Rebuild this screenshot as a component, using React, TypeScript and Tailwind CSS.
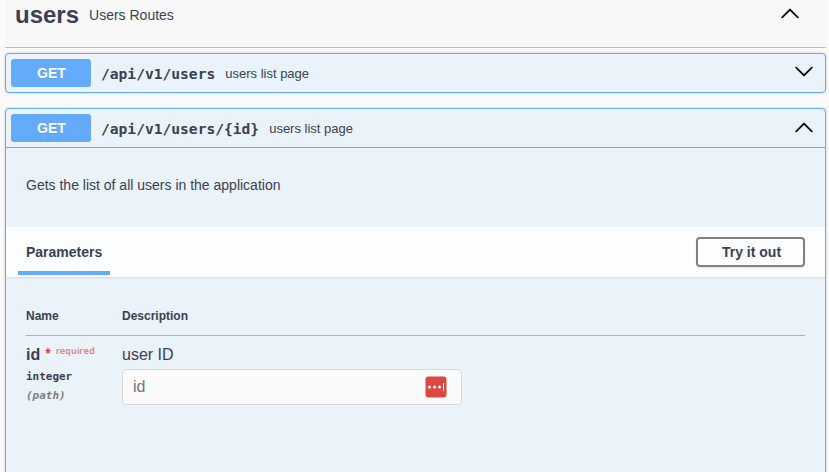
import React from 'react';

const mono = "font-['DejaVu_Sans_Mono',monospace]";

function Chevron({ down = false }: { down?: boolean }) {
  return (
    <svg width="20" height="20" viewBox="0 0 20 20" className={down ? 'rotate-180' : ''} aria-hidden="true">
      <path
        fill="#000"
        stroke="#000"
        strokeWidth="0.3"
        d="M17.418 14.908c.272.281.709.281.979 0s.271-.736 0-1.017l-7.908-7.829c-.27-.281-.707-.281-.979 0l-7.908 7.83c-.27.28-.27.735 0 1.016.271.282.709.282.979 0L10 7.767z"
      />
    </svg>
  );
}

function Summary({ path, down }: { path: string; down?: boolean }) {
  return (
    <div className="flex h-[38px] items-center pl-[5px] pr-[11px]">
      <span className="h-7 w-20 rounded-[3px] bg-[#65abfc] pl-px text-center text-[14px] font-bold leading-7 text-white [text-shadow:0_1px_0_rgba(0,0,0,0.1)]">
        GET
      </span>
      <span className={`${mono} ml-2.5 mt-px text-[14.6px] font-bold leading-5 whitespace-nowrap`}>{path}</span>
      <span className="ml-2.5 mt-0.5 flex-1 text-[13px] leading-5">users list page</span>
      <div className={down ? 'mb-0.5' : 'mb-[3px]'}>
        <Chevron down={down} />
      </div>
    </div>
  );
}

export default function App() {
  return (
    <main className="h-[472px] w-[829px] overflow-hidden bg-[#fafafa] pl-[5px] pr-[3px] font-['Liberation_Sans',Arial,sans-serif] text-[#3b4151]">
      <header className="flex h-12 items-start border-b border-[#bdbec1] bg-[#f8f8f8] pl-2.5 pr-[26px]">
        <h2 className="text-[24px] font-bold leading-[30px]">users</h2>
        <p className="ml-2.5 flex-1 text-[14px] leading-[30px]">Users Routes</p>
        <div className="mt-[3px]">
          <Chevron />
        </div>
      </header>

      <section className="mt-[5px] rounded border border-[#65abfc] bg-[#eaf2fa] shadow-[0_0_3px_rgba(0,0,0,0.19)]">
        <Summary path="/api/v1/users" down />
      </section>

      <section className="mt-[15px] h-[400px] rounded border border-[#65abfc] bg-[#eaf2fa] shadow-[0_0_3px_rgba(0,0,0,0.19)]">
        <div className="border-b border-[#65abfc]">
          <Summary path="/api/v1/users/{id}" />
        </div>
        <p className="h-[79px] px-5 pt-[27px] text-[14px] leading-5">Gets the list of all users in the application</p>

        <div className="flex h-[50px] items-center justify-between bg-[#fcfdff] pl-3 pr-5 shadow-[0_1px_2px_rgba(0,0,0,0.1)]">
          <h4 className="mt-0.5 h-11 w-[92px] border-b-4 border-[#65abfc] pl-2 text-[14px] font-bold leading-[42px]">
            Parameters
          </h4>
          <button className="h-[30px] w-[109px] rounded border-2 border-[#808080] pl-0.5 text-[14px] font-bold leading-[26px] shadow-[0_1px_2px_rgba(0,0,0,0.1)]">
            Try it out
          </button>
        </div>

        <div className="px-5 pt-[29px]">
          <div className="flex h-[30px] border-b border-[#a9b1be] text-[12px] font-bold leading-5">
            <span className="w-24">Name</span>
            <span>Description</span>
          </div>
          <div className="flex pt-[9px]">
            <div className="w-24">
              <div className="flex h-5 text-[16px] font-bold leading-5">
                <span>id</span>
                <span className="ml-[5px] font-['Open_Sans',sans-serif] text-[10px] leading-[15px] text-[#f22]">*</span>
                <span className="ml-[5px] -mt-0.5 font-['Open_Sans',sans-serif] text-[9.4px] font-semibold leading-[15px] text-[#f97474]">
                  required
                </span>
              </div>
              <div className={`${mono} mt-0.5 text-[10.96px] font-bold leading-5`}>integer</div>
              <div className={`${mono} -mt-px text-[10.96px] font-bold italic leading-5 text-[#808080]`}>(path)</div>
            </div>
            <div>
              <p className="text-[16px] leading-5">user ID</p>
              <div className="mt-1 flex h-9 w-[340px] items-center justify-between rounded border border-[#d9d9d9] bg-[#fafafa] pl-2.5 pr-3.5">
                <span className="text-[16px] leading-5 text-[#757575]">id</span>
                <svg width="22" height="22" viewBox="0 0 22 22" aria-hidden="true">
                  <rect x="0.5" y="0.5" width="21" height="21" rx="3" fill="#d9493f" />
                  <circle cx="4.5" cy="11" r="1.5" fill="#fff" />
                  <circle cx="9.5" cy="11" r="1.5" fill="#fff" />
                  <circle cx="14.5" cy="11" r="1.5" fill="#fff" />
                  <rect x="18" y="7" width="1" height="8" fill="#fff" />
                </svg>
              </div>
            </div>
          </div>
        </div>
      </section>
    </main>
  );
}
